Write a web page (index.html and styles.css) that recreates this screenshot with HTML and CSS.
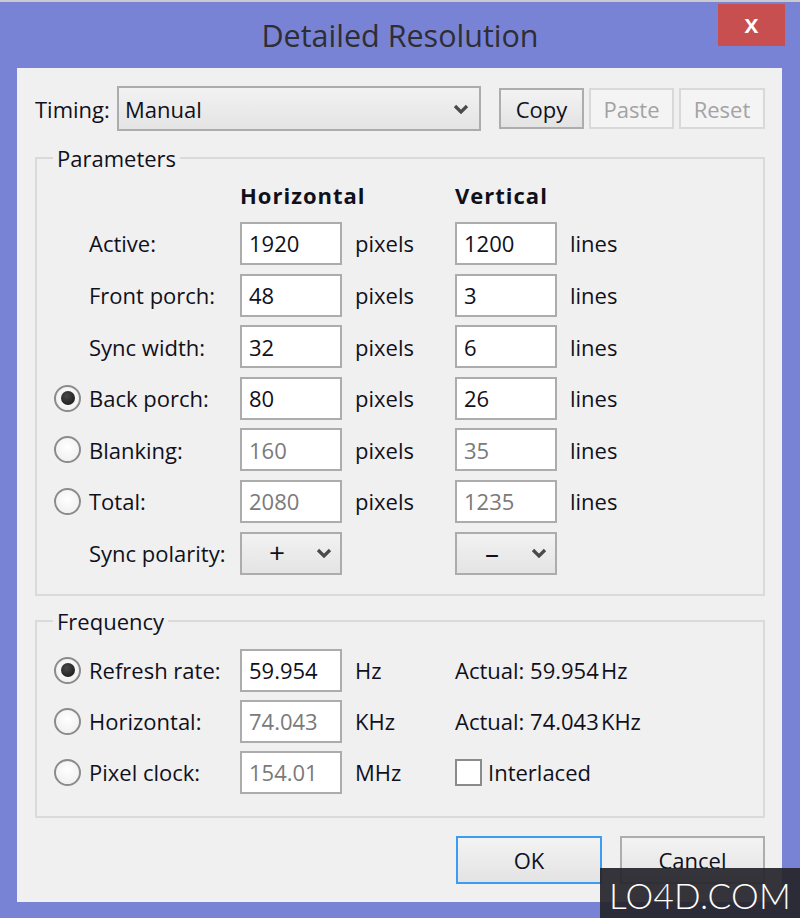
FILE: index.html
```html
<!DOCTYPE html>
<html>
<head>
<meta charset="utf-8">
<title>Detailed Resolution</title>
<link rel="stylesheet" href="styles.css">
</head>
<body>
<div class="window">
  <div class="titlebar">
    <span class="title">Detailed Resolution</span>
    <div class="close">x</div>
  </div>
  <div class="client">
    <div class="timing-row">
      <span class="lbl timing-lbl">Timing:</span>
      <div class="combo wide">
        <span class="combo-text">Manual</span>
        <svg class="chev" width="16" height="10" viewBox="0 0 16 10"><path d="M2 2 L8 8 L14 2" fill="none" stroke="#4a4a4a" stroke-width="3.2"/></svg>
      </div>
      <div class="btn small">Copy</div>
      <div class="btn small disabled">Paste</div>
      <div class="btn small disabled reset">Reset</div>
    </div>

    <fieldset class="group params">
      <legend>Parameters</legend>
      <div class="row hdr-row">
        <span></span><span></span>
        <span class="hdr">Horizontal</span><span></span>
        <span class="hdr">Vertical</span><span></span>
      </div>
      <div class="row">
        <span></span><span class="lbl">Active:</span>
        <div class="field">1920</div><span class="unit">pixels</span>
        <div class="field">1200</div><span class="unit">lines</span>
      </div>
      <div class="row">
        <span></span><span class="lbl">Front porch:</span>
        <div class="field">48</div><span class="unit">pixels</span>
        <div class="field">3</div><span class="unit">lines</span>
      </div>
      <div class="row">
        <span></span><span class="lbl">Sync width:</span>
        <div class="field">32</div><span class="unit">pixels</span>
        <div class="field">6</div><span class="unit">lines</span>
      </div>
      <div class="row">
        <span class="radio checked"></span><span class="lbl">Back porch:</span>
        <div class="field">80</div><span class="unit">pixels</span>
        <div class="field">26</div><span class="unit">lines</span>
      </div>
      <div class="row">
        <span class="radio"></span><span class="lbl">Blanking:</span>
        <div class="field dis">160</div><span class="unit">pixels</span>
        <div class="field dis">35</div><span class="unit">lines</span>
      </div>
      <div class="row">
        <span class="radio"></span><span class="lbl">Total:</span>
        <div class="field dis">2080</div><span class="unit">pixels</span>
        <div class="field dis">1235</div><span class="unit">lines</span>
      </div>
      <div class="row">
        <span></span><span class="lbl">Sync polarity:</span>
        <div class="combo pol">
          <span class="sign">+</span>
          <svg class="chev" width="16" height="10" viewBox="0 0 16 10"><path d="M2 2 L8 8 L14 2" fill="none" stroke="#4a4a4a" stroke-width="3.2"/></svg>
        </div>
        <span></span>
        <div class="combo pol">
          <span class="sign minus">–</span>
          <svg class="chev" width="16" height="10" viewBox="0 0 16 10"><path d="M2 2 L8 8 L14 2" fill="none" stroke="#4a4a4a" stroke-width="3.2"/></svg>
        </div>
        <span></span>
      </div>
    </fieldset>

    <fieldset class="group freq">
      <legend>Frequency</legend>
      <div class="row frow">
        <span class="radio checked"></span><span class="lbl">Refresh rate:</span>
        <div class="field">59.954</div><span class="unit">Hz</span>
        <span class="actual">Actual: 59.954&#8202;Hz</span>
      </div>
      <div class="row frow">
        <span class="radio"></span><span class="lbl">Horizontal:</span>
        <div class="field dis">74.043</div><span class="unit">KHz</span>
        <span class="actual">Actual: 74.043&#8202;KHz</span>
      </div>
      <div class="row frow">
        <span class="radio"></span><span class="lbl">Pixel clock:</span>
        <div class="field dis">154.01</div><span class="unit">MHz</span>
        <span class="check-wrap"><span class="checkbox"></span><span class="lbl">Interlaced</span></span>
      </div>
    </fieldset>

    <div class="actions">
      <div class="btn big default">OK</div>
      <div class="btn big">Cancel</div>
    </div>
  </div>
  <div class="watermark">LO4D.COM</div>
</div>
</body>
</html>
```

FILE: styles.css
```css
* { box-sizing: border-box; }
html, body { margin: 0; padding: 0; }
body {
  background: #7983d5;
  font-family: "Open Sans", "Noto Sans", "DejaVu Sans", sans-serif;
  color: #10101c;
}
.window {
  position: relative;
  width: 800px;
  height: 918px;
  background: #7983d5;
  border-top: 2px solid #c9c9cf;
  display: flex;
  flex-direction: column;
  overflow: hidden;
}
.titlebar {
  position: relative;
  flex: 0 0 66px;
  display: flex;
  align-items: center;
  justify-content: center;
}
.title {
  font-size: 30.5px;
  color: #2e2e34;
  margin-top: 0;
}
.close {
  position: absolute;
  right: 15px;
  top: 2px;
  width: 67px;
  height: 42px;
  background: #c74f4f;
  color: #fff;
  font-size: 26px;
  font-weight: 600;
  display: flex;
  align-items: center;
  justify-content: center;
  padding-bottom: 4px;
}
.client {
  margin: 0 18px 16px 17px;
  background: #f0f0f0;
  flex: 1;
  padding: 18px 17px 17px 18px;
  display: flex;
  flex-direction: column;
  font-size: 22px;
}
.lbl { white-space: nowrap; }
.timing-row {
  display: flex;
  align-items: center;
  flex: 0 0 45px;
}
.timing-lbl { width: 82px; }
.combo {
  display: flex;
  align-items: center;
  border: 2px solid #acacac;
  background: linear-gradient(#f2f2f2, #e4e4e4);
}
.combo.wide {
  flex: 1;
  height: 45px;
  margin-right: 18px;
  padding: 0 10px 0 6px;
  justify-content: space-between;
}
.chev { display: block; flex-shrink: 0; }
.btn {
  display: flex;
  align-items: center;
  justify-content: center;
  border: 2px solid #adadad;
  background: linear-gradient(#f3f3f3, #e3e3e3);
}
.btn.small { width: 85px; height: 41px; margin-right: 5px; }
.btn.small.reset { width: 86px; margin-right: 0; }
.btn.disabled {
  border-color: #d9d9d9;
  background: #f4f4f4;
  color: #a3a3a3;
}
.group {
  margin: 0;
  border: 2px solid #dadada;
  padding: 0;
  min-width: 0;
  display: flex;
  flex-direction: column;
  gap: 8.6px;
}
.group legend {
  margin-left: 16px;
  padding: 0 4px;
  line-height: 28px;
}
.params { margin-top: 13px; padding: 8px 0 19px; }
.row {
  display: grid;
  grid-template-columns: 17px 35px 151px 102px 113px 102px 1fr;
  height: 43px;
  align-items: center;
}
.row > :first-child { grid-column: 2; }
.hdr-row { height: 26px; margin-bottom: 7.4px; }
.hdr { font-weight: 700; letter-spacing: 1px; }
.field {
  height: 43px;
  border: 2px solid #acacac;
  background: #fff;
  padding-left: 7px;
  display: flex;
  align-items: center;
}
.field.dis { color: #7a7a7a; }
.unit { padding-left: 13px; white-space: nowrap; }
.combo.pol {
  height: 43px;
  padding: 0 8px 0 0;
  justify-content: space-between;
}
.sign {
  width: 70px;
  text-align: center;
  font-size: 28px;
  line-height: 1;
  padding-bottom: 3px;
}
.radio {
  width: 27px;
  height: 27px;
  border-radius: 50%;
  border: 2px solid #8b8b8b;
  background: radial-gradient(circle at 50% 40%, #ffffff, #ececec);
  display: flex;
  align-items: center;
  justify-content: center;
}
.radio.checked::after {
  content: "";
  width: 14px;
  height: 14px;
  border-radius: 50%;
  background: radial-gradient(circle at 40% 35%, #4a4a4a, #111);
}
.freq { margin-top: 11px; padding: 14px 0 22px; gap: 8px; }
.actual { white-space: nowrap; }
.check-wrap { display: flex; align-items: center; gap: 6px; }
.checkbox {
  flex: 0 0 27px;
  width: 27px;
  height: 27px;
  border: 2px solid #8b8b8b;
  background: #fff;
}
.actions {
  margin-top: 18px;
  display: flex;
  justify-content: flex-end;
  gap: 18px;
}
.btn.big { width: 145px; height: 48px; }
.btn.default { width: 146px; border-color: #3d9cf2; }
.watermark {
  position: absolute;
  left: 600px;
  top: 866px;
  width: 200px;
  height: 52px;
  background: rgba(38, 38, 44, 0.93);
  color: #fff;
  font-family: "Lato", "Open Sans", sans-serif;
  font-weight: 300;
  font-size: 35px;
  letter-spacing: 0.3px;
  display: flex;
  align-items: center;
  justify-content: center;
  padding-top: 2px;
}
```
